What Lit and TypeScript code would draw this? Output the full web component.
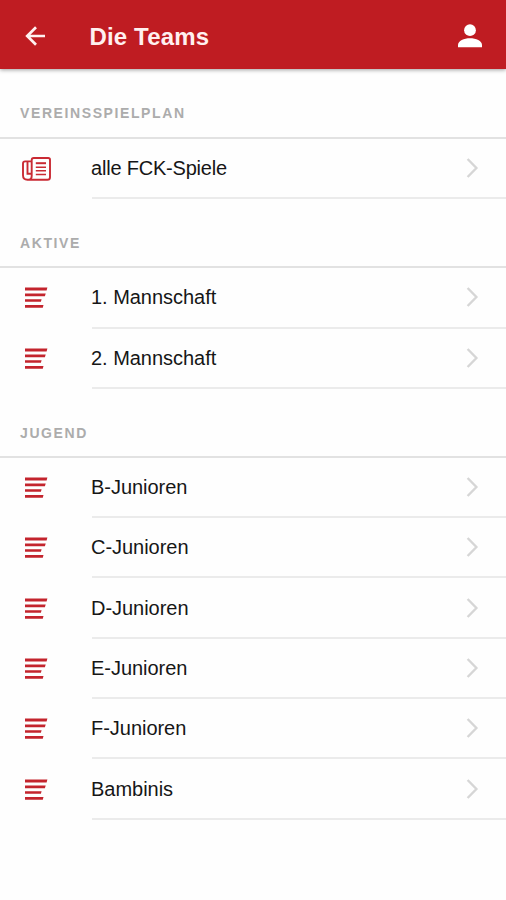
import { LitElement, html, css } from "lit";
import { customElement, property } from "lit/decorators.js";

const newsIcon = html`<svg width="29" height="24" viewBox="0 0 29 24" fill="none" stroke="#c92a33">
  <path stroke-width="1.9" d="M11.8 1h14.4q1.8 0 1.8 1.8v17.4q0 2.6-2.6 2.6H5.4Q1 22.8 1 18.3V6.4q0-2 2.2-2H9.6M11.8 1q-2.1 0-2.1 2.1v15.7q0 4-3 4M5.5 4.6v12.2h4"/>
  <path stroke-width="2" d="M13.8 6.2h10.2"/>
  <path stroke-width="1.5" d="M13.8 10.2h10.2M13.8 13.8h10.2M13.8 17.4h10.2"/>
</svg>`;

const listIcon = html`<svg width="24" height="22" viewBox="0 0 24 22" fill="#c3242d">
  <path d="M1 .6h22.4l-.8 2.8H1zM1 6.5h20.7l-.8 2.7H1zM1 12.3h16.6l-.7 2.5H1zM1 18h18.5l-.7 2.8H1z"/>
</svg>`;

@customElement("team-row")
class TeamRow extends LitElement {
  @property() label = "";
  @property() icon = "list";

  static styles = css`
    :host { display: flex; height: 60.3px; }
    .icon { width: 72px; padding-left: 20px; box-sizing: border-box; display: flex; align-items: center; }
    .icon svg { margin-left: 4px; }
    .icon.news svg { margin-left: 2px; }
    .body {
      flex: 1; margin-left: 20px; padding-right: 27px; box-sizing: border-box;
      display: flex; align-items: center; justify-content: space-between;
      border-bottom: 2px solid #ebebeb;
    }
    .label {
      margin-left: -1px; font-size: 20px; line-height: 24px; color: #161616;
      letter-spacing: -0.03px;
    }
    .news + .body .label { letter-spacing: -0.2px; }
    svg { display: block; }
  `;

  render() {
    return html`
      <div class="icon ${this.icon}">${this.icon === "news" ? newsIcon : listIcon}</div>
      <div class="body">
        <span class="label">${this.label}</span>
        <svg width="14" height="22" viewBox="0 0 14 22" fill="none" stroke="#d6d6d6" stroke-width="2.4">
          <path d="M2.6 2l8.8 9-8.8 9" />
        </svg>
      </div>`;
  }
}

const sections = [
  { title: "VEREINSSPIELPLAN", icon: "news", rows: ["alle FCK-Spiele"] },
  { title: "AKTIVE", icon: "list", rows: ["1. Mannschaft", "2. Mannschaft"] },
  {
    title: "JUGEND",
    icon: "list",
    rows: ["B-Junioren", "C-Junioren", "D-Junioren", "E-Junioren", "F-Junioren", "Bambinis"],
  },
];

@customElement("app-root")
class AppRoot extends LitElement {
  static styles = css`
    :host {
      display: block; height: 900px; background: #fefefe; overflow: hidden;
      font-family: "Liberation Sans", Arial, sans-serif;
    }
    header {
      height: 69px; box-sizing: border-box; padding: 3px 24px 0 25px;
      display: flex; align-items: center;
      background: #bf1c22; color: #fff;
      box-shadow: 0 1px 4px rgba(0, 0, 0, 0.38);
    }
    svg { display: block; }
    h1 {
      flex: 1; margin: 1px 0 0 43.5px; font-size: 24px; line-height: 28px; font-weight: 700;
      letter-spacing: 0.15px; color: #fff0f0;
    }
    h2 {
      margin: 0; height: 69px; box-sizing: border-box; padding: 36px 0 0 20px;
      font-size: 14px; line-height: 16px; letter-spacing: 1.6px; font-weight: 700;
      color: #acacac; border-bottom: 2px solid #e2e2e2;
    }
    .first { height: 70px; }
  `;

  render() {
    return html`
      <header>
        <svg width="21" height="20" viewBox="0 0 21 20" fill="none" stroke="#fff0f0" stroke-width="2.7">
          <path d="M20 10H2.5M11 1.2L2.2 10l8.8 8.8" />
        </svg>
        <h1>Die Teams</h1>
        <svg width="24" height="24" viewBox="0 0 24 24" fill="#fff">
          <circle cx="12" cy="6.2" r="5.9" />
          <path d="M0 23.3v-2.5c0-4 6-6.6 12-6.6s12 2.6 12 6.6v2.5z" />
        </svg>
      </header>
      ${sections.map(
        (s, i) => html`
          <h2 class=${i === 0 ? "first" : ""}>${s.title}</h2>
          ${s.rows.map((r) => html`<team-row .label=${r} .icon=${s.icon}></team-row>`)}
        `
      )}`;
  }
}
